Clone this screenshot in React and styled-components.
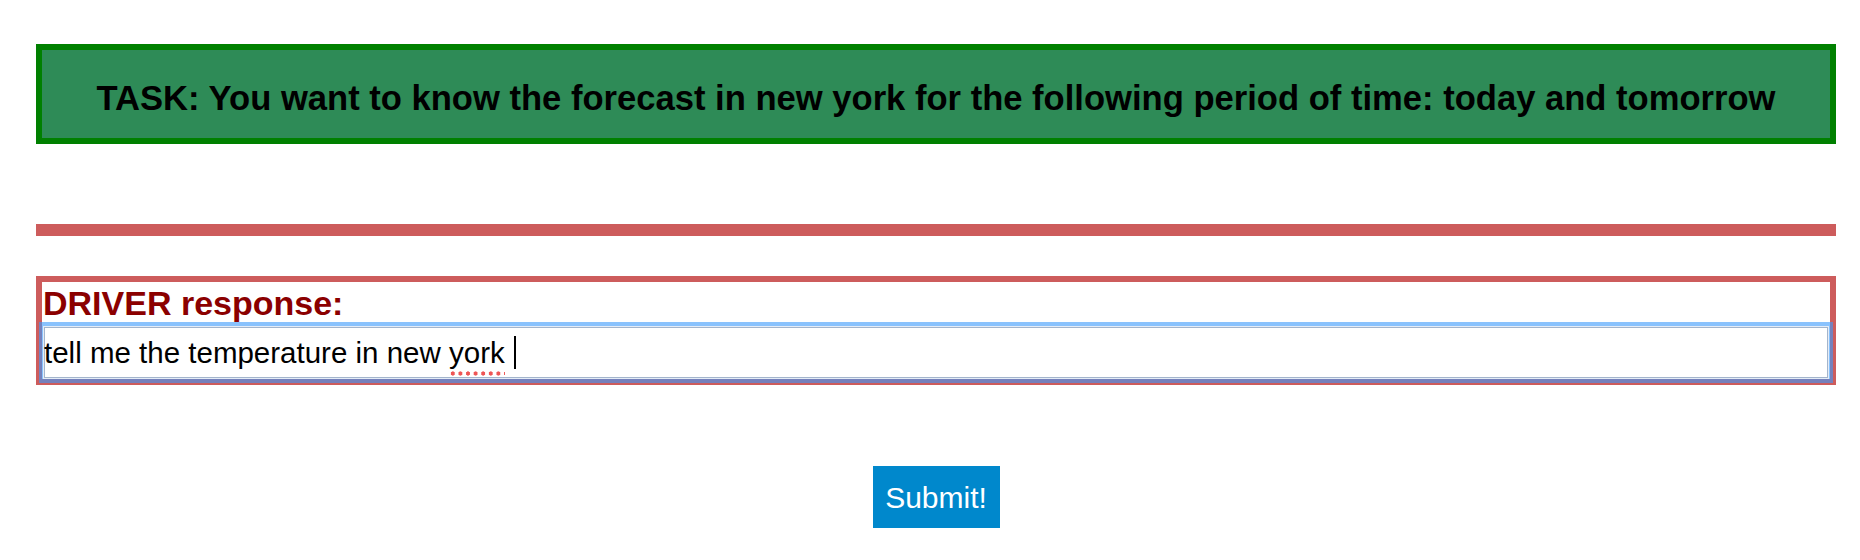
import React from "react";
import styled, { createGlobalStyle } from "styled-components";

const Global = createGlobalStyle`
  html, body { margin: 0; padding: 0; background: #ffffff; }
  body { font-family: "Liberation Sans", Arial, Helvetica, sans-serif; }
`;

const Page = styled.div`
  padding: 44px 24px 0 36px;
  display: flex;
  flex-direction: column;
`;

const TaskBox = styled.div`
  border: 6px solid #008000;
  background: #2e8b57;
  padding: 28px 0 20px;
  text-align: center;
`;

const TaskText = styled.h2`
  margin: 0;
  font-size: 34.6px;
  line-height: 40px;
  font-weight: 700;
  color: #000000;
`;

const Divider = styled.div`
  margin-top: 80px;
  height: 12px;
  background: #cd5c5c;
`;

const DriverBox = styled.div`
  margin-top: 40px;
  border: 6px solid #cd5c5c;
  padding: 0 1px;
  display: flex;
  flex-direction: column;
`;

const DriverLabel = styled.label`
  padding-top: 2px;
  font-size: 34px;
  line-height: 38px;
  font-weight: 700;
  color: #8b0000;
`;

const Field = styled.div`
  margin-top: 4px;
  height: 53px;
  box-sizing: border-box;
  border: 1px solid #e4ecf7;
  box-shadow: inset 0 0 0 1px #a3b5cc, 0 0 0 4px rgba(59, 153, 252, 0.6);
  background: #ffffff;
  padding: 0;
  display: flex;
  align-items: center;
  font-size: 29.5px;
  color: #000000;
  white-space: pre;
`;

const Misspelled = styled.span`
  position: relative;
  &::after {
    content: "";
    position: absolute;
    left: 0;
    right: 0;
    bottom: -6px;
    height: 5px;
    background: radial-gradient(circle, #ee5555 1.9px, transparent 2.3px) 0 0 / 7.6px 5px repeat-x;
  }
`;

const Caret = styled.span`
  display: inline-block;
  width: 2px;
  height: 33px;
  background: #000000;
  margin-left: 9px;
`;

const Actions = styled.div`
  margin-top: 81px;
  display: flex;
  justify-content: center;
`;

const SubmitButton = styled.button`
  width: 127px;
  height: 62px;
  border: none;
  background: #0088cc;
  color: #ffffff;
  font-family: "Liberation Sans", Arial, Helvetica, sans-serif;
  font-size: 30px;
  padding: 1px 0 0;
  cursor: pointer;
`;

export default function App() {
  return (
    <>
      <Global />
      <Page>
        <TaskBox>
          <TaskText>
            TASK: You want to know the forecast in new york for the following period of time: today and tomorrow
          </TaskText>
        </TaskBox>
        <Divider />
        <DriverBox>
          <DriverLabel>DRIVER response:</DriverLabel>
          <Field role="textbox">
            {"tell me the temperature in new "}
            <Misspelled>york</Misspelled>
            <Caret />
          </Field>
        </DriverBox>
        <Actions>
          <SubmitButton>Submit!</SubmitButton>
        </Actions>
      </Page>
    </>
  );
}
